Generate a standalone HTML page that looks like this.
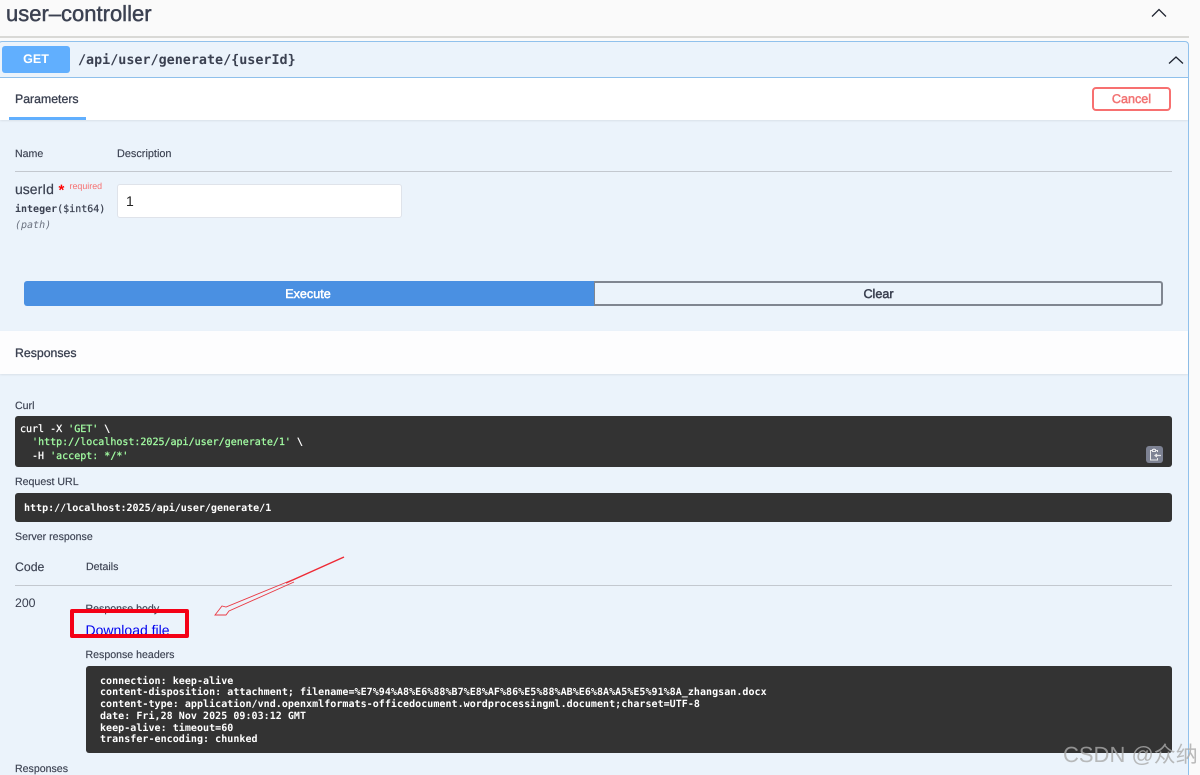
<!DOCTYPE html>
<html><head><meta charset="utf-8">
<style>
html,body{margin:0;padding:0}
body{width:1200px;height:775px;position:relative;overflow:hidden;background:#fafafa;font-family:"Liberation Sans","Noto Sans CJK SC",sans-serif;color:#3b4151;text-rendering:geometricPrecision}
.a{position:absolute;white-space:pre;line-height:1}
.b{position:absolute}
.m{font-family:"DejaVu Sans Mono","Liberation Mono",monospace}
.dark{position:absolute;background:#333;border-radius:3px}
.l{font-size:10.6px;color:#3b4151;-webkit-text-stroke:.15px #3b4151}
.g{color:#a2fca2}
</style></head><body>
<div class="a" style="left:6px;top:2px;font-size:22px;line-height:24px;color:#3b4151;-webkit-text-stroke:.45px #3b4151">user–controller</div>
<svg class="b" style="left:1150px;top:7px" width="18" height="12"><path d="M2 9.5 L9 2.5 L16 9.5" fill="none" stroke="#1f2430" stroke-width="1.3"/></svg>
<div class="b" style="left:0;top:36px;width:1189px;height:2px;background:#d9d9d6"></div>

<div class="b" style="left:-2px;top:41px;width:1191px;height:734px;box-sizing:border-box;border:1px solid #90c1ec;border-bottom:0;border-radius:4px 4px 0 0;background:#ebf3fb"></div>
<div class="b" style="left:0;top:77px;width:1188px;height:1px;background:#90c1ec"></div>
<div class="b" style="left:2px;top:46px;width:68px;height:27px;background:#61affe;border-radius:3px"></div>
<div class="a" style="left:2px;top:53px;width:68px;text-align:center;color:#fff;font-size:12.5px;font-weight:bold">GET</div>
<div class="a m" style="left:78px;top:54px;font-size:13.4px;font-weight:bold;color:#3b4151">/api/user/generate/{userId}</div>
<svg class="b" style="left:1167px;top:54px" width="18" height="12"><path d="M2 9.5 L9 3 L16 9.5" fill="none" stroke="#1f2430" stroke-width="1.3"/></svg>

<div class="b" style="left:0;top:78px;width:1188px;height:42px;background:#fff;box-shadow:0 1px 2px rgba(0,0,0,.08)"></div>
<div class="a" style="left:15px;top:93px;font-size:12.3px;color:#3b4151;-webkit-text-stroke:.3px #3b4151">Parameters</div>
<div class="b" style="left:9px;top:117px;width:77px;height:3px;background:#61affe"></div>
<div class="b" style="left:1092px;top:87px;width:79px;height:24px;box-sizing:border-box;border:2px solid #f77070;border-radius:4px;background:#fff"></div>
<div class="a" style="left:1092px;top:93px;width:79px;text-align:center;font-size:12.6px;color:#f27474;-webkit-text-stroke:.5px #f27474">Cancel</div>

<div class="a l" style="left:15px;top:149px">Name</div>
<div class="a l" style="left:117px;top:149px;font-size:10.9px">Description</div>
<div class="b" style="left:15px;top:171px;width:1157px;height:1px;background:#c3c8cf"></div>

<div class="a" style="left:15px;top:182px;font-size:14px;color:#3b4151;-webkit-text-stroke:.2px #3b4151">userId</div>
<div class="a" style="left:58.500px;top:183px;font-size:15px;font-weight:bold;color:#f00">*</div>
<div class="a" style="left:69.500px;top:181.500px;font-size:8.9px;color:#f77070">required</div>
<div class="a m" style="left:15px;top:205px;font-size:10px;font-weight:bold;color:#3b4151">integer<span style="font-weight:normal;-webkit-text-stroke:.2px #3b4151">($int64)</span></div>
<div class="a m" style="left:15px;top:221px;font-size:10px;font-style:italic;color:#6b7280">(path)</div>
<div class="b" style="left:117px;top:184px;width:285px;height:34px;background:#fff;border:1px solid #dfe3ea;box-sizing:border-box;border-radius:3px"></div>
<div class="a" style="left:126px;top:194px;font-size:14px;color:#222">1</div>

<div class="b" style="left:24px;top:281px;width:570px;height:25px;background:#4a90e2;border-radius:3px 0 0 3px"></div>
<div class="a" style="left:23px;top:288px;width:570px;text-align:center;color:#fff;font-size:12.6px;-webkit-text-stroke:.5px #fff">Execute</div>
<div class="b" style="left:594px;top:281px;width:569px;height:25px;box-sizing:border-box;border:2px solid #808690;border-left:1px solid #808690;border-radius:0 3px 3px 0"></div>
<div class="a" style="left:594px;top:288px;width:569px;text-align:center;color:#3b4151;font-size:12.6px;-webkit-text-stroke:.5px #3b4151">Clear</div>

<div class="b" style="left:0;top:331px;width:1188px;height:43px;background:#fdfdfe;box-shadow:0 1px 2px rgba(0,0,0,.08)"></div>
<div class="a" style="left:15px;top:347px;font-size:12.3px;color:#3b4151;-webkit-text-stroke:.3px #3b4151">Responses</div>

<div class="a l" style="left:15px;top:401px">Curl</div>
<div class="dark" style="left:15px;top:416px;width:1157px;height:51px"></div>
<div class="a m" style="left:20px;top:423px;font-size:10px;line-height:13.3px;color:#fff;-webkit-text-stroke:.25px #fff">curl -X <span class="g" style="-webkit-text-stroke:.25px #a2fca2">'GET'</span> \
  <span class="g" style="-webkit-text-stroke:.25px #a2fca2">'http://localhost:2025/api/user/generate/1'</span> \
  -H <span class="g" style="-webkit-text-stroke:.25px #a2fca2">'accept: */*'</span></div>
<div class="b" style="left:1146px;top:446px;width:17px;height:17px;border-radius:3px;background:#7d8293"></div>
<svg class="b" style="left:1146px;top:446px" width="17" height="17" fill="none" stroke="#e8e8ea" stroke-width="1"><path d="M11.500 6 V4.500 H10 M6 4.500 H4.500 V14 H11.500 V12"/><path d="M6.500 5.500 V3.500 H7.500 Q8 2.200 8.500 3.500 H9.500 V5.500 Z"/><path d="M15 9.500 H9.500 M11 8 L9 9.500 L11 11" stroke-width="1.200"/></svg>

<div class="a l" style="left:15px;top:477px">Request URL</div>
<div class="dark" style="left:15px;top:493px;width:1157px;height:29px"></div>
<div class="a m" style="left:24px;top:503px;font-size:10.03px;font-weight:bold;color:#fff;line-height:11px">http://localhost:2025/api/user/generate/1</div>

<div class="a l" style="left:15px;top:532px">Server response</div>
<div class="a" style="left:15px;top:561px;font-size:12.3px;color:#3b4151;-webkit-text-stroke:.15px #3b4151">Code</div>
<div class="a l" style="left:86px;top:562px">Details</div>
<div class="b" style="left:15px;top:585px;width:1157px;height:1px;background:#c3c8cf"></div>
<div class="a" style="left:15px;top:597px;font-size:12.3px;color:#3b4151">200</div>
<div class="a l" style="left:85.500px;top:604px">Response body</div>
<div class="a" style="left:85.500px;top:623px;font-size:14px;color:#0000ee">Download file</div>
<div class="b" style="left:70px;top:609px;width:119px;height:29px;box-sizing:border-box;border:4px solid #f40016;border-radius:2px"></div>
<svg class="b" style="left:210px;top:552px" width="140" height="70" fill="none" stroke="#ee2a35"><path d="M134 5 L76 31" stroke-width="1.500"/><path d="M82 28 L16 55 L12 54 L5 63 L16 63 L19 59 L84 30" stroke-width=".9" stroke="#ea3a44"/></svg>

<div class="a l" style="left:85.500px;top:650px">Response headers</div>
<div class="dark" style="left:85.500px;top:666px;width:1086.500px;height:87px"></div>
<div class="a m" style="left:100px;top:675.500px;font-size:10px;line-height:11.8px;font-weight:bold;color:#fff;letter-spacing:.04px">connection: keep-alive
content-disposition: attachment; filename=%E7%94%A8%E6%88%B7%E8%AF%86%E5%88%AB%E6%8A%A5%E5%91%8A_zhangsan.docx
content-type: application/vnd.openxmlformats-officedocument.wordprocessingml.document;charset=UTF-8
date: Fri,28 Nov 2025 09:03:12 GMT
keep-alive: timeout=60
transfer-encoding: chunked</div>
<div class="a l" style="left:15px;top:764px">Responses</div>
<div class="a" style="left:1063px;top:743px;font-size:22px;line-height:24px;color:rgba(170,170,170,.8)">CSDN @众纳</div>
</body></html>
